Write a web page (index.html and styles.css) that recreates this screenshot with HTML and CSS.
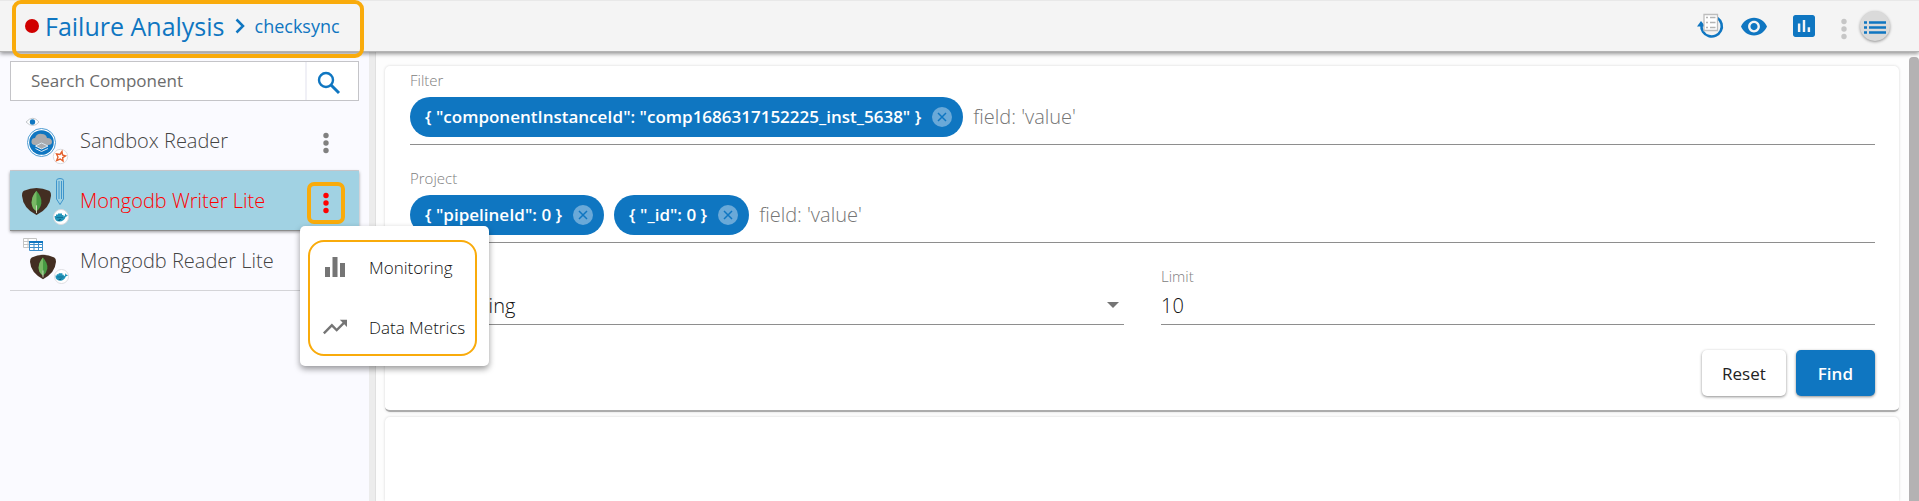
FILE: index.html
```html
<!DOCTYPE html>
<html lang="en">
<head>
<meta charset="utf-8">
<title>Failure Analysis</title>
<link rel="stylesheet" href="styles.css">
</head>
<body>
<svg class="defs" aria-hidden="true">
  <symbol id="dots" viewBox="0 0 6 22">
    <circle cx="3" cy="3.500" r="2.700"/><circle cx="3" cy="11" r="2.700"/><circle cx="3" cy="18.500" r="2.700"/>
  </symbol>
  <symbol id="mongo" viewBox="0 0 30 30">
    <path fill="#432e22" d="M2 4Q15-2 28 4Q30 5 30 9Q29 22 15 29Q1 22 0 9Q0 5 2 4Z"/>
    <path fill="#489a43" d="M15 4Q21 11 20 17Q19 22 15 25Q10 22 10 16Q10 10 15 4Z"/>
    <path fill="#79b865" d="M15 4V25Q10 22 10 16Q10 10 15 4Z"/>
    <path stroke="#d5d9c4" d="M15 19V27"/>
  </symbol>
  <symbol id="docker" viewBox="0 0 16 16">
    <circle cx="8" cy="8" r="7.500" fill="#fff" stroke="#dcdce0"/>
    <path fill="#2093b8" d="M1.500 7H3V5.500H5V4.500H9V6H10.500V7.500Q12 7.500 12 5.500L12.500 4.500Q13.500 5.500 13.300 6.300H14.800Q14.300 7.700 12.700 7.800Q11 12.500 6.500 12.500Q1.500 12.500 1.500 7Z"/>
    <path stroke="#0d6386" stroke-width=".7" d="M3.500 8.500H10M5 11.500Q7 11.500 8 10"/>
  </symbol>
</svg>

<header class="topbar">
  <nav class="crumbs" aria-label="Breadcrumb">
    <span class="status"></span>
    <a class="crumb-main" href="#">Failure Analysis</a>
    <svg class="chevron" viewBox="0 0 10 16"><path d="M1.500 1.500L8 8L1.500 14.500"/></svg>
    <a class="crumb-sub" href="#">checksync</a>
  </nav>
  <div class="tools">
    <button class="tool" aria-label="Sync logs">
      <svg width="28" height="26" viewBox="0 0 28 26">
        <path d="M21.500 5A10.200 10.200 0 1 1 5.500 12" fill="none" stroke="#0f76c1" stroke-width="2.600"/>
        <path d="M1 13.500L5 8L9.500 13.500Z" fill="#0f76c1"/>
        <path d="M8 1.500H21.500V17.500H8Z" fill="#fff" stroke="#bdbdbd" stroke-width="1.300"/>
        <path d="M10 4.500H12M14 4.500H19.500M10 9.500H12M14 9.500H19.500M10 14.500H12M14 14.500H19.500" stroke="#b4b4b4" stroke-width="1.300"/>
      </svg>
    </button>
    <button class="tool" aria-label="Preview">
      <svg width="26" height="20" viewBox="1 4 22 15"><path fill="#0f76c1" d="M12 4.500C7 4.500 2.730 7.610 1 12c1.730 4.390 6 7.500 11 7.500s9.270-3.110 11-7.500c-1.730-4.390-6-7.500-11-7.500zM12 17c-2.760 0-5-2.240-5-5s2.240-5 5-5 5 2.240 5 5-2.240 5-5 5zm0-8c-1.660 0-3 1.340-3 3s1.340 3 3 3 3-1.340 3-3-1.340-3-3-3z"/></svg>
    </button>
    <button class="tool tool-chart" aria-label="Statistics">
      <svg width="22" height="22" viewBox="3 3 18 18"><path fill="#0f76c1" d="M19 3H5c-1.100 0-2 .9-2 2v14c0 1.100.9 2 2 2h14c1.100 0 2-.9 2-2V5c0-1.100-.9-2-2-2zM9 17H7v-7h2v7zm4 0h-2V7h2v10zm4 0h-2v-4h2v4z"/></svg>
    </button>
    <button class="tool tool-more" aria-label="More"><svg width="6" height="22"><use href="#dots"/></svg></button>
    <button class="tool tool-list" aria-label="Component list">
      <svg width="22" height="13" viewBox="0 0 22 13"><path d="M0 1.500H3M5 1.500H22M0 6.500H3M5 6.500H22M0 11.500H3M5 11.500H22" stroke="#0f76c1" stroke-width="2.400"/></svg>
    </button>
  </div>
</header>

<div class="layout">
  <aside class="sidebar">
    <form class="search">
      <input type="text" placeholder="Search Component" aria-label="Search Component">
      <button type="button" aria-label="Search">
        <svg width="24" height="24" viewBox="0 0 24 24"><circle cx="9" cy="9" r="7" fill="none" stroke="#0f76c1" stroke-width="2.400"/><path d="M14 14L22 22" stroke="#0f76c1" stroke-width="3"/></svg>
      </button>
    </form>
    <ul class="components">
      <li class="component">
        <svg class="thumb" viewBox="0 0 48 48">
          <path d="M4 5Q11-2.500 17 5Q11 12 4 5Z" fill="#fff" stroke="#c4c8cc"/><circle cx="10.500" cy="5" r="2.700" fill="#0f76c1"/>
          <circle cx="19.500" cy="25.500" r="14" fill="#fff" stroke="#4d9bd2"/><circle cx="19.500" cy="25.500" r="12.300" fill="#0f76c1"/>
          <path fill="#a9aaad" d="M13 28Q9 28 9.500 24Q10 21 13 21Q15 16 20 17Q24 17 25 21Q30 21 30 25Q30 28 26 28Z"/>
          <path fill="#a9aaad" stroke="#d8e8f4" d="M13.500 29L19.500 26L26 29L19.500 32Z"/><path fill="none" stroke="#d8e8f4" d="M13.500 31.500L19.500 34.500L26 31.500"/>
          <circle cx="38.500" cy="39.500" r="7.200" fill="#fff" stroke="#dcdce0"/>
          <path fill="none" stroke="#e4602d" stroke-width="1.400" d="M40 34.500L40.500 38L43.500 39L40.700 40.700L41 44L38.300 42L34.700 43.500L36 40L34.500 37L38 37.500Z"/>
        </svg>
        <span class="name">Sandbox Reader</span>
        <button class="more" aria-label="Sandbox Reader options"><svg width="6" height="22"><use href="#dots"/></svg></button>
      </li>
      <li class="component selected">
        <svg class="thumb" viewBox="0 0 48 48">
          <use href="#mongo" x="0" y="10" width="29" height="29"/>
          <path fill="none" stroke="#3e95cc" d="M34.500 3.500Q34.500 1.500 38 1.500Q41.500 1.500 41.500 3.500V22L38 27.500L34.500 22ZM37 4V22M39.500 4V22"/>
          <use href="#docker" x="31" y="32" width="16" height="16"/>
        </svg>
        <span class="name">Mongodb Writer Lite</span>
        <button class="more" aria-label="Mongodb Writer Lite options" aria-expanded="true"><svg width="6" height="22"><use href="#dots"/></svg></button>
        <div class="menu" role="menu">
          <div class="menu-frame">
            <button role="menuitem">
              <svg width="24" height="22" viewBox="0 0 24 22"><path fill="#757575" d="M2 11H7V21H2ZM9.500 1H14.500V21H9.500ZM17 7H22V21H17Z"/></svg>
              Monitoring
            </button>
            <button role="menuitem">
              <svg width="24" height="16" viewBox="2 6 20 12"><path fill="#757575" d="M16 6l2.290 2.290-4.880 4.880-4-4L2 16.590 3.410 18l6-6 4 4 6.300-6.290L22 12V6z"/></svg>
              Data Metrics
            </button>
          </div>
        </div>
      </li>
      <li class="component">
        <svg class="thumb" viewBox="0 0 48 48">
          <path fill="#fff" stroke="#c4c4c4" d="M1.500 1.500H14.500V10.500H1.500ZM1.500 4.500H14.500M1.500 7.500H14.500M6 1.500V10.500"/>
          <path fill="#fff" stroke="#3e8fcb" d="M7.500 4.500H20.500V13.500H7.500ZM7.500 7.500H20.500M7.500 10.500H20.500M12 4.500V13.500M16.500 4.500V13.500"/><path stroke="#0f76c1" stroke-width="2" d="M7 5H21"/>
          <use href="#mongo" x="8" y="17" width="26" height="26"/>
          <use href="#docker" x="32" y="32" width="15" height="15"/>
        </svg>
        <span class="name">Mongodb Reader Lite</span>
        <button class="more" aria-label="Mongodb Reader Lite options"><svg width="6" height="22"><use href="#dots"/></svg></button>
      </li>
    </ul>
  </aside>

  <main class="content">
    <form class="card query">
      <div class="field">
        <label for="filter">Filter</label>
        <div class="chips">
          <span class="chip">{ "componentInstanceId": "comp1686317152225_inst_5638" }<button type="button" aria-label="Remove filter"><svg viewBox="0 0 20 20"><path d="M6 6L14 14M14 6L6 14"/></svg></button></span>
          <input id="filter" type="text" placeholder="field: 'value'">
        </div>
      </div>
      <div class="field">
        <label for="project">Project</label>
        <div class="chips">
          <span class="chip">{ "pipelineId": 0 }<button type="button" aria-label="Remove pipelineId"><svg viewBox="0 0 20 20"><path d="M6 6L14 14M14 6L6 14"/></svg></button></span>
          <span class="chip">{ "_id": 0 }<button type="button" aria-label="Remove _id"><svg viewBox="0 0 20 20"><path d="M6 6L14 14M14 6L6 14"/></svg></button></span>
          <input id="project" type="text" placeholder="field: 'value'">
        </div>
      </div>
      <div class="pair">
        <div class="field">
          <label for="sort">Sort</label>
          <div class="select">
            <select id="sort"><option>Descending</option><option>Ascending</option></select>
          </div>
        </div>
        <div class="field">
          <label for="limit">Limit</label>
          <input id="limit" class="value" type="text" value="10">
        </div>
      </div>
      <div class="actions">
        <button type="reset" class="btn">Reset</button>
        <button type="button" class="btn primary">Find</button>
      </div>
    </form>
    <section class="card results"></section>
  </main>
  <div class="scrollbar"></div>
</div>
</body>
</html>
```
FILE: styles.css
```css
* { box-sizing: border-box; }
html { height: 100%; }
body {
  margin: 0;
  height: 100vh;
  display: flex;
  flex-direction: column;
  overflow: hidden;
  background: #fff;
  color: #333;
  font-family: "Open Sans", "Noto Sans", sans-serif;
  font-size: 17px;
  font-weight: 300;
}
button, input, select { font: inherit; color: inherit; margin: 0; padding: 0; border: 0; background: none; }
button { cursor: pointer; }
input, select { outline: 0; min-width: 0; }
svg { display: block; }
a { text-decoration: none; color: #0f76c1; }
.defs { position: absolute; width: 0; height: 0; }

/* Top bar */
.topbar {
  position: relative;
  z-index: 2;
  display: flex;
  justify-content: space-between;
  align-items: center;
  height: 52px;
  padding: 0 29px 0 12px;
  background: #f4f4f4;
  border-top: 1px solid #e8e8e8;
  border-bottom: 1px solid #b4b4b4;
  box-shadow: 0 2px 4px rgba(0, 0, 0, .4);
}
.crumbs {
  display: flex;
  align-items: center;
  align-self: flex-start;
  height: 58px;
  margin-top: -1px;
  padding: 0 20px 6px 9px;
  border: 4px solid #f9ab0b;
  border-radius: 9px;
}
.status { width: 14px; height: 14px; margin-right: 6px; border-radius: 50%; background: #d00000; }
.crumb-main { font-size: 25px; font-weight: 400; }
.chevron { width: 10px; height: 16px; margin: 0 10px; fill: none; stroke: #0f76c1; stroke-width: 2.500; }
.crumb-sub { font-size: 18px; font-weight: 400; }
.tools { display: flex; align-items: center; }
.tool { margin-left: 17px; }
.tool-chart { margin-left: 26px; }
.tool-more { margin: 5px 0 0 26px; fill: #c6c6c6; }
.tool-list {
  display: grid;
  place-items: center;
  width: 30px;
  height: 30px;
  margin-left: 13px;
  padding-top: 3px;
  border-radius: 50%;
  background: #dadada;
  box-shadow: 0 1px 3px rgba(0, 0, 0, .4);
}

.layout { flex: 1; display: flex; min-height: 0; }

/* Sidebar */
.sidebar { flex: 0 0 375px; padding: 9px 10px 0 10px; background: #fafaff; border-right: 6px solid #ececec; }
.search { display: flex; height: 40px; background: #fff; border: 1px solid #c4c4c8; }
.search input { flex: 1; padding: 0 20px 2px; }
.search input::placeholder { color: #6c6c6c; opacity: 1; font-weight: 400; }
.search button { display: grid; place-items: center; width: 53px; padding: 3px 8px 0 0; border-left: 2px solid #f0f0f6; }
.components { margin: 10px 0 0; padding: 0; list-style: none; }
.component {
  position: relative;
  display: flex;
  align-items: center;
  height: 60px;
  padding: 0 14px 0 12px;
  border-bottom: 1px solid #d4d4d8;
  color: #444;
  font-size: 20px;
}
.thumb { width: 48px; height: 48px; margin-right: 10px; }
.name { flex: 1; }
.more { display: grid; place-items: center; width: 38px; height: 42px; margin-top: 4px; border: 4px solid transparent; border-radius: 7px; fill: #808080; }
.selected { z-index: 3; background: #a1d2e3; color: #f00; border-bottom-color: #8c8c8c; box-shadow: 0 1px 3px rgba(0, 0, 0, .4); }
.selected .more { border-color: #f9ab0b; fill: #f00; }

.menu {
  position: absolute;
  top: 55px;
  left: 290px;
  width: 189px;
  padding: 14px 12px 10px 8px;
  background: #fff;
  border-radius: 5px;
  box-shadow: 0 3px 6px rgba(0, 0, 0, .4);
  font-size: 17px;
  color: #111;
}
.menu-frame { display: grid; gap: 12px; padding: 1px 0 3px; border: 2px solid #f9ab0b; border-radius: 16px; }
.menu-frame button { display: flex; align-items: center; gap: 22px; height: 48px; padding-left: 13px; white-space: nowrap; }
.menu-frame button svg { flex: none; }

/* Content */
.content { flex: 1; display: flex; flex-direction: column; gap: 5px; min-width: 0; padding: 14px 10px 0 9px; border-left: 1px solid #e0e0e0; background: #fdfdfd; }
.card { background: #fff; border-radius: 5px; box-shadow: 0 0 3px rgba(0, 0, 0, .16); }
.query { padding: 4px 24px 14px 25px; border-bottom: 2px solid #acacac; }
.results { flex: 1; border-radius: 5px 5px 0 0; }
.field { height: 98px; }
.field label { display: block; height: 20px; line-height: 20px; font-size: 15px; color: #808080; }
.chips { display: flex; align-items: center; gap: 10px; height: 55px; padding-bottom: 1px; border-bottom: 1px solid #8e8e8e; }
.chip {
  display: flex;
  align-items: center;
  gap: 11px;
  height: 40px;
  padding: 0 11px 0 15px;
  border-radius: 20px;
  background: #0f76c1;
  color: #fff;
  font-weight: 600;
  white-space: nowrap;
}
.chip button { border-radius: 50%; background: #6aa9d8; }
.chip svg { width: 20px; height: 20px; stroke: #0f76c1; stroke-width: 1.500; }
.chips input { flex: 1; font-size: 20px; }
.chips input::placeholder { color: #757575; opacity: 1; }
.pair { display: grid; grid-template-columns: 1fr 1fr; gap: 37px; }
.pair .field { height: 84px; }
.value, .select { width: 100%; height: 39px; border-bottom: 1px solid #8e8e8e; font-size: 20px; color: #111; }
.select { display: flex; align-items: center; padding-right: 5px; }
.select select { flex: 1; appearance: none; height: 100%; }
.select::after { content: ""; border: 6px solid transparent; border-top-color: #757575; border-bottom: 0; }
.actions { display: flex; justify-content: flex-end; gap: 10px; }
.btn { height: 46px; padding: 0 20px; border-radius: 5px; background: #fff; box-shadow: 0 1px 3px rgba(0, 0, 0, .45); color: #222; font-weight: 400; }
.primary { padding: 0 22px; background: #0f76c1; color: #fff; font-weight: 600; }

.scrollbar { flex: none; width: 10px; margin-top: 5px; border-radius: 4px 4px 0 0; background: #b4b2b3; }
```
